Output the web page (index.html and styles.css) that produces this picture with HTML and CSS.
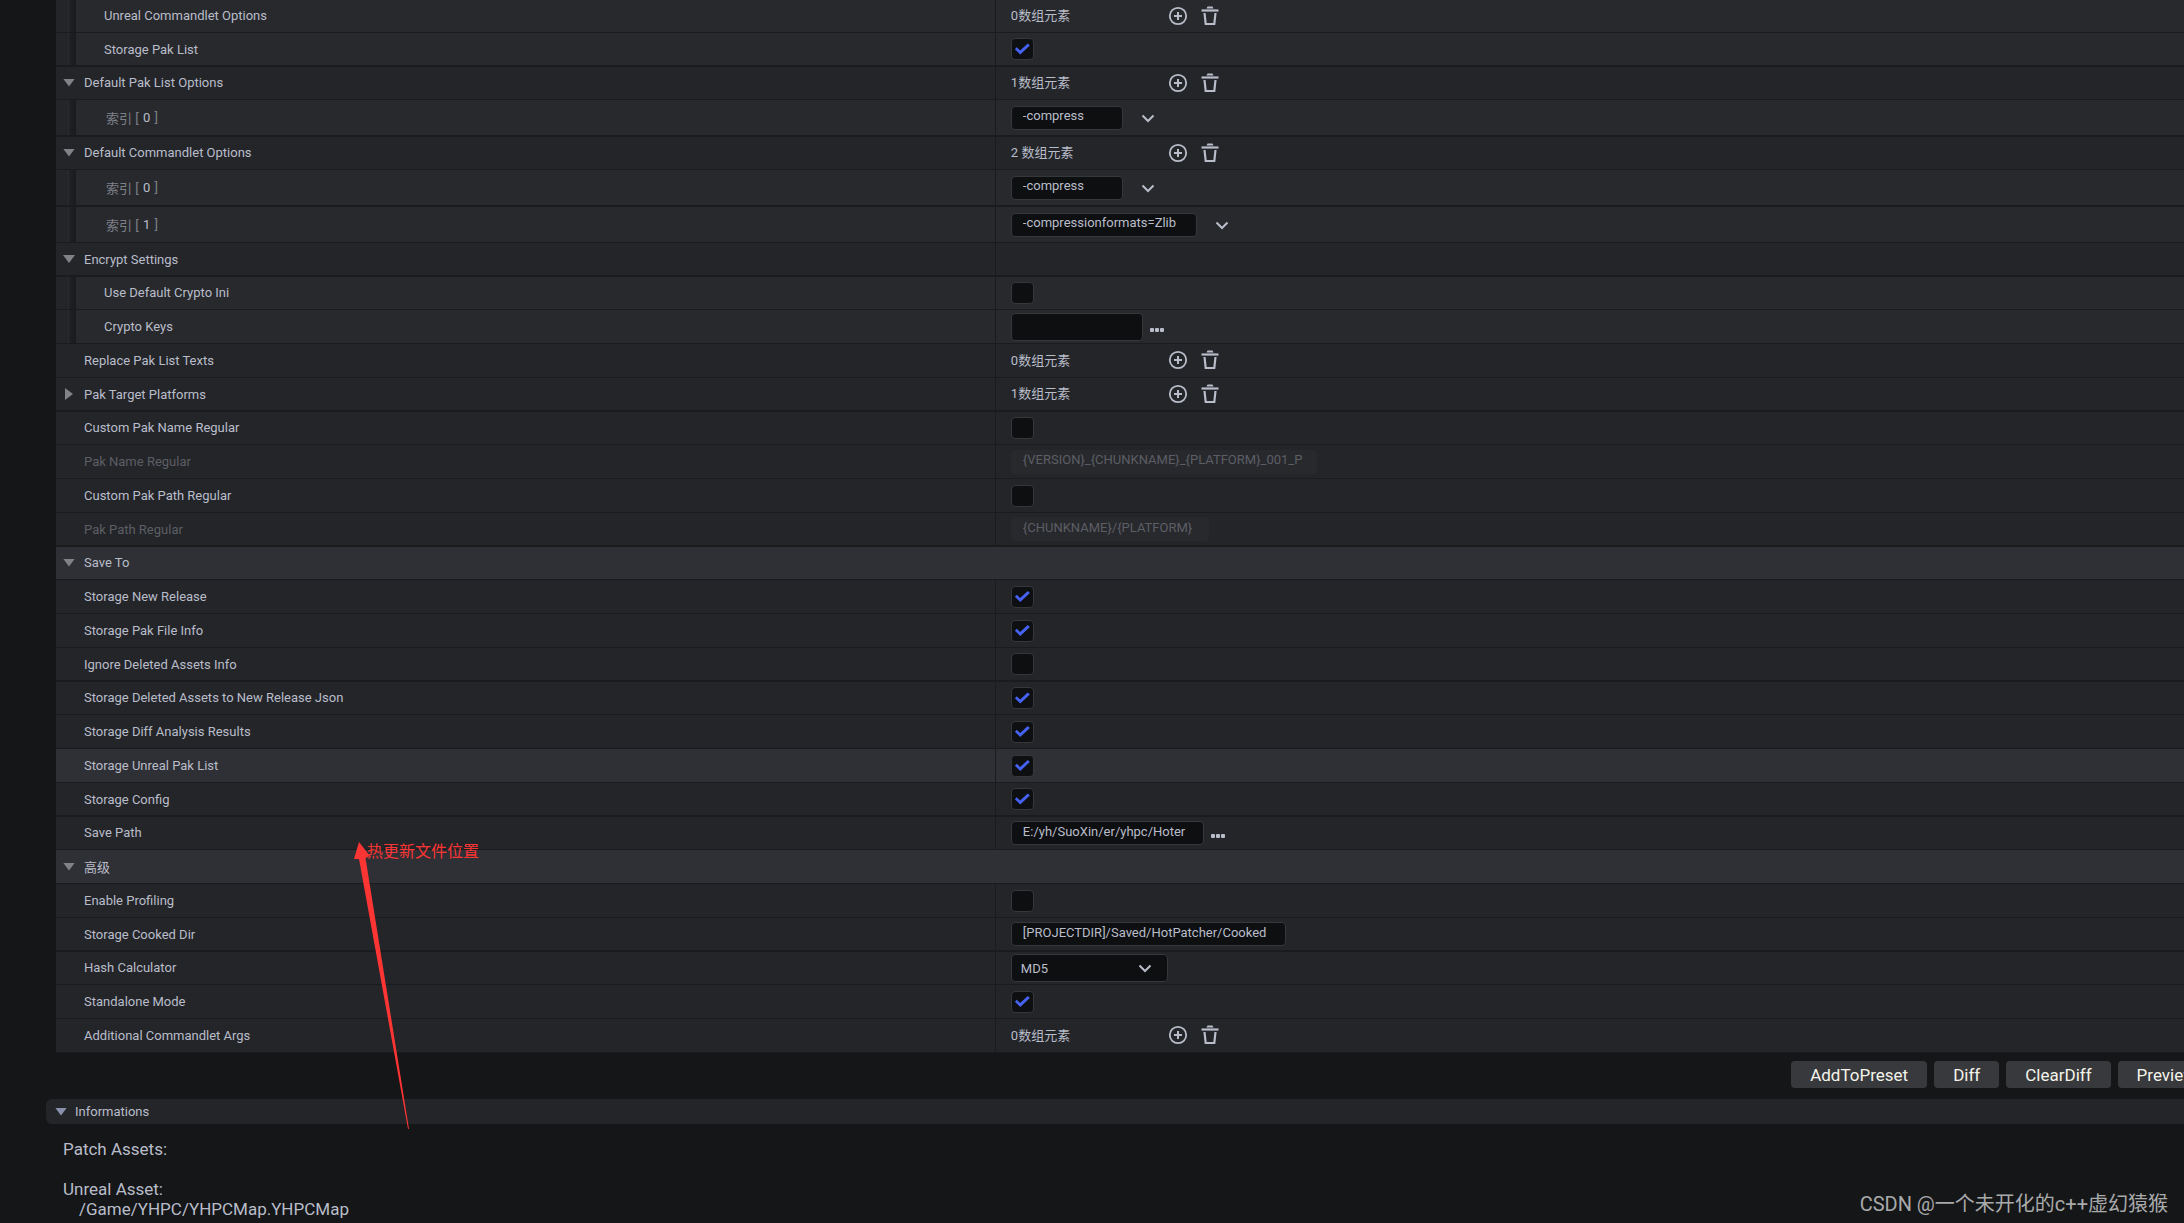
FILE: index.html
```html
<!DOCTYPE html>
<html lang="zh-CN">
<head>
    <meta charset="UTF-8">
    <meta name="viewport" content="width=device-width, initial-scale=1.0">
    <title>HotPatcher</title>
    <link rel="stylesheet" href="styles.css">
</head>
<body>
    <!-- shared icons -->
    <svg class="sprite" aria-hidden="true">
        <symbol id="icon-add" viewBox="0 0 20 20">
            <circle cx="10" cy="10" r="8.2" fill="none" stroke="currentColor" stroke-width="1.8"/>
            <path d="M10 6v8M6 10h8" fill="none" stroke="currentColor" stroke-width="2"/>
        </symbol>
        <symbol id="icon-trash" viewBox="0 0 20 20">
            <path d="M6.500 2.500L7.500 0.500h5l1 2z" fill="currentColor"/>
            <path d="M1.500 4.500h17" fill="none" stroke="currentColor" stroke-width="2.200"/>
            <path d="M4.500 7l1.200 11h8.600l1.200-11" fill="none" stroke="currentColor" stroke-width="2.200"/>
        </symbol>
        <symbol id="icon-chevron" viewBox="0 0 14 14">
            <path d="M1.500 4.500L7 10l5.500-5.500" fill="none" stroke="currentColor" stroke-width="2"/>
        </symbol>
        <symbol id="icon-dots" viewBox="0 0 14 4">
            <rect x="0" y="0" width="4" height="4" rx="1" fill="currentColor"/>
            <rect x="5" y="0" width="4" height="4" rx="1" fill="currentColor"/>
            <rect x="10" y="0" width="4" height="4" rx="1" fill="currentColor"/>
        </symbol>
    </svg>

    <main class="details">
        <div class="row child short">
            <div class="name">Unreal Commandlet Options</div>
            <div class="value">
                <span class="count">0数组元素</span>
                <button class="icon-btn" aria-label="Add"><svg><use href="#icon-add"/></svg></button>
                <button class="icon-btn" aria-label="Clear"><svg><use href="#icon-trash"/></svg></button>
            </div>
        </div>
        <div class="row child thick">
            <label class="name" for="storagePakList">Storage Pak List</label>
            <div class="value"><input type="checkbox" id="storagePakList" checked></div>
        </div>
        <div class="row short">
            <div class="name"><button class="arrow" aria-label="Collapse"></button>Default Pak List Options</div>
            <div class="value">
                <span class="count">1数组元素</span>
                <button class="icon-btn" aria-label="Add"><svg><use href="#icon-add"/></svg></button>
                <button class="icon-btn" aria-label="Clear"><svg><use href="#icon-trash"/></svg></button>
            </div>
        </div>
        <div class="row child item thick">
            <label class="name" for="pakOption0">索引 [ <b>0</b> ]</label>
            <div class="value">
                <input type="text" class="w-small" id="pakOption0" value="-compress">
                <button class="menu-btn" aria-label="Options"><svg><use href="#icon-chevron"/></svg></button>
            </div>
        </div>
        <div class="row short">
            <div class="name"><button class="arrow" aria-label="Collapse"></button>Default Commandlet Options</div>
            <div class="value">
                <span class="count">2 数组元素</span>
                <button class="icon-btn" aria-label="Add"><svg><use href="#icon-add"/></svg></button>
                <button class="icon-btn" aria-label="Clear"><svg><use href="#icon-trash"/></svg></button>
            </div>
        </div>
        <div class="row child item thick">
            <label class="name" for="cmdOption0">索引 [ <b>0</b> ]</label>
            <div class="value">
                <input type="text" class="w-small" id="cmdOption0" value="-compress">
                <button class="menu-btn" aria-label="Options"><svg><use href="#icon-chevron"/></svg></button>
            </div>
        </div>
        <div class="row child item short">
            <label class="name" for="cmdOption1">索引 [ <b>1</b> ]</label>
            <div class="value">
                <input type="text" class="w-medium" id="cmdOption1" value="-compressionformats=Zlib">
                <button class="menu-btn" aria-label="Options"><svg><use href="#icon-chevron"/></svg></button>
            </div>
        </div>
        <div class="row thick">
            <div class="name"><button class="arrow" aria-label="Collapse"></button>Encrypt Settings</div>
            <div class="value"></div>
        </div>
        <div class="row child short">
            <label class="name" for="useCryptoIni">Use Default Crypto Ini</label>
            <div class="value"><input type="checkbox" id="useCryptoIni"></div>
        </div>
        <div class="row child">
            <label class="name" for="cryptoKeys">Crypto Keys</label>
            <div class="value">
                <input type="text" class="w-keys" id="cryptoKeys">
                <button class="dots-btn" aria-label="Browse"><svg><use href="#icon-dots"/></svg></button>
            </div>
        </div>
        <div class="row">
            <div class="name">Replace Pak List Texts</div>
            <div class="value">
                <span class="count">0数组元素</span>
                <button class="icon-btn" aria-label="Add"><svg><use href="#icon-add"/></svg></button>
                <button class="icon-btn" aria-label="Clear"><svg><use href="#icon-trash"/></svg></button>
            </div>
        </div>
        <div class="row thick">
            <div class="name"><button class="arrow closed" aria-label="Expand"></button>Pak Target Platforms</div>
            <div class="value">
                <span class="count">1数组元素</span>
                <button class="icon-btn" aria-label="Add"><svg><use href="#icon-add"/></svg></button>
                <button class="icon-btn" aria-label="Clear"><svg><use href="#icon-trash"/></svg></button>
            </div>
        </div>
        <div class="row short">
            <label class="name" for="customPakName">Custom Pak Name Regular</label>
            <div class="value"><input type="checkbox" id="customPakName"></div>
        </div>
        <div class="row off">
            <label class="name" for="pakName">Pak Name Regular</label>
            <div class="value"><input type="text" class="w-wide" id="pakName" value="{VERSION}_{CHUNKNAME}_{PLATFORM}_001_P" disabled></div>
        </div>
        <div class="row">
            <label class="name" for="customPakPath">Custom Pak Path Regular</label>
            <div class="value"><input type="checkbox" id="customPakPath"></div>
        </div>
        <div class="row off thick">
            <label class="name" for="pakPath">Pak Path Regular</label>
            <div class="value"><input type="text" class="w-path" id="pakPath" value="{CHUNKNAME}/{PLATFORM}" disabled></div>
        </div>

        <div class="row category short">
            <div class="name"><button class="arrow" aria-label="Collapse"></button>Save To</div>
        </div>
        <div class="row">
            <label class="name" for="newRelease">Storage New Release</label>
            <div class="value"><input type="checkbox" id="newRelease" checked></div>
        </div>
        <div class="row">
            <label class="name" for="pakFileInfo">Storage Pak File Info</label>
            <div class="value"><input type="checkbox" id="pakFileInfo" checked></div>
        </div>
        <div class="row thick">
            <label class="name" for="ignoreDeleted">Ignore Deleted Assets Info</label>
            <div class="value"><input type="checkbox" id="ignoreDeleted"></div>
        </div>
        <div class="row short">
            <label class="name" for="storageDeleted">Storage Deleted Assets to New Release Json</label>
            <div class="value"><input type="checkbox" id="storageDeleted" checked></div>
        </div>
        <div class="row">
            <label class="name" for="diffResults">Storage Diff Analysis Results</label>
            <div class="value"><input type="checkbox" id="diffResults" checked></div>
        </div>
        <div class="row active">
            <label class="name" for="unrealPakList">Storage Unreal Pak List</label>
            <div class="value"><input type="checkbox" id="unrealPakList" checked></div>
        </div>
        <div class="row thick">
            <label class="name" for="storageConfig">Storage Config</label>
            <div class="value"><input type="checkbox" id="storageConfig" checked></div>
        </div>
        <div class="row short">
            <label class="name" for="savePath">Save Path</label>
            <div class="value">
                <input type="text" class="w-save" id="savePath" value="E:/yh/SuoXin/er/yhpc/Hoter">
                <button class="dots-btn" aria-label="Browse"><svg><use href="#icon-dots"/></svg></button>
            </div>
        </div>

        <div class="row category">
            <div class="name"><button class="arrow" aria-label="Collapse"></button>高级</div>
        </div>
        <div class="row">
            <label class="name" for="profiling">Enable Profiling</label>
            <div class="value"><input type="checkbox" id="profiling"></div>
        </div>
        <div class="row thick">
            <label class="name" for="cookedDir">Storage Cooked Dir</label>
            <div class="value"><input type="text" class="w-cooked" id="cookedDir" value="[PROJECTDIR]/Saved/HotPatcher/Cooked"></div>
        </div>
        <div class="row short">
            <label class="name" for="hash">Hash Calculator</label>
            <div class="value">
                <div class="select">
                    <select id="hash"><option>MD5</option></select>
                    <svg><use href="#icon-chevron"/></svg>
                </div>
            </div>
        </div>
        <div class="row">
            <label class="name" for="standalone">Standalone Mode</label>
            <div class="value"><input type="checkbox" id="standalone" checked></div>
        </div>
        <div class="row">
            <div class="name">Additional Commandlet Args</div>
            <div class="value">
                <span class="count">0数组元素</span>
                <button class="icon-btn" aria-label="Add"><svg><use href="#icon-add"/></svg></button>
                <button class="icon-btn" aria-label="Clear"><svg><use href="#icon-trash"/></svg></button>
            </div>
        </div>
    </main>

    <!-- the last button runs off the window edge -->
    <div class="actions">
        <button>AddToPreset</button>
        <button>Diff</button>
        <button>ClearDiff</button>
        <button class="cut">Preview</button>
    </div>

    <section class="info">
        <h2><button class="arrow" aria-label="Collapse"></button>Informations</h2>
        <div class="log">
            <p>Patch Assets:</p>
            <p>Unreal Asset:<br><span class="asset">/Game/YHPC/YHPCMap.YHPCMap</span></p>
        </div>
    </section>

    <!-- note over the panel -->
    <div class="note">
        <svg width="58" height="288" viewBox="0 0 58 288">
            <path d="M6 0L17 14L12.500 16L56 287L55 287L6 17L1 17z" fill="#fb3434"/>
        </svg>
        <span>热更新文件位置</span>
    </div>
    <div class="watermark">CSDN @一个未开化的c++虚幻猿猴</div>
</body>
</html>
```

FILE: styles.css
```css
* {
    box-sizing: border-box;
}
body {
    margin: 0;
    height: 100vh;
    overflow: hidden;
    position: relative;
    background-color: #151618;
    color: #b9bdc9;
    font-family: Roboto, "Noto Sans CJK SC", sans-serif;
    font-size: 13px;
}
.sprite {
    display: none;
}
button {
    padding: 0;
    border: none;
    background: none;
    color: inherit;
    font: inherit;
    cursor: pointer;
}
svg {
    display: block;
}

/* property rows */
.details {
    margin-left: 56px;
}
.row {
    display: grid;
    grid-template-columns: 53fr 67fr;
    height: 34px;
    background-color: #242529;
    border-bottom: 1px solid #1a1b1d;
}
.row.short {
    height: 33px;
}
.row.thick {
    border-bottom-width: 2px;
}
.row.item {
    height: 37px;
}
.row.item.short {
    height: 36px;
}
.row.child {
    background: linear-gradient(to right, #242529 12px, #2a2b2f 12px, #2a2b2f 13px, #202124 13px, #1a1b1d 20px, #28292d 20px);
}
.row.category,
.row.active {
    background-color: #2f3035;
}
.name {
    display: flex;
    align-items: center;
    padding: 0 0 0 28px;
    white-space: pre;
    border-right: 1px solid #1a1b1d;
}
.short .name {
    padding-bottom: 1px;
}
.child .name {
    padding-left: 48px;
}
.item .name {
    padding-bottom: 1px;
    padding-left: 50px;
    color: #7d808a;
}
.item b {
    padding: 0 1px;
    color: #b9bdc9;
    font-weight: normal;
}
.off .name {
    color: #5c5e65;
}
.category .name {
    border-right: none;
}
.value {
    display: flex;
    align-items: center;
    padding-left: 15px;
}

/* expander triangle */
.arrow {
    width: 12px;
    height: 8px;
    margin: 0 9px 0 -21px;
    background-color: #808287;
    clip-path: polygon(0 0, 100% 0, 50% 100%);
}
.arrow.closed {
    width: 8px;
    height: 12px;
    margin: 0 11px 0 -19px;
    clip-path: polygon(0 0, 100% 50%, 0 100%);
}

/* controls */
input,
select {
    margin: 0;
    border: 1px solid #36373b;
    border-radius: 4px;
    background-color: #0e0f11;
    color: #b9bdc9;
    font: inherit;
}
input[type="text"] {
    height: 24px;
    padding: 0 11px 4px;
}
input[type="text"]:disabled {
    border-color: #28292d;
    background-color: #28292d;
    color: #5c5e65;
}
input[type="checkbox"] {
    appearance: none;
    display: grid;
    place-items: center;
    width: 23px;
    height: 22px;
}
input[type="checkbox"]:checked::before {
    content: "";
    width: 15px;
    height: 12px;
    background-color: #4562f2;
    clip-path: polygon(0 52%, 13% 36%, 35% 62%, 86% 5%, 100% 20%, 36% 96%);
}
.w-small {
    width: 112px;
}
.w-medium {
    width: 186px;
}
.w-keys {
    width: 132px;
}
input.w-keys {
    height: 28px;
}
.w-wide {
    width: 306px;
}
.w-path {
    width: 198px;
}
.w-save {
    width: 193px;
}
.w-cooked {
    width: 275px;
}
.count {
    width: 157px;
    padding-bottom: 3px;
}
.icon-btn {
    margin: 0 12px 1px 0;
}
.icon-btn svg {
    width: 20px;
    height: 20px;
}
.menu-btn {
    margin-left: 18px;
}
.menu-btn svg,
.select svg {
    width: 14px;
    height: 14px;
}
.dots-btn {
    margin-left: 7px;
    padding-top: 6px;
}
.dots-btn svg {
    width: 14px;
    height: 4px;
}
.select {
    display: grid;
    align-items: center;
    width: 157px;
}
.select select,
.select svg {
    grid-area: 1 / 1;
}
.select select {
    appearance: none;
    width: 100%;
    height: 28px;
    padding: 0 9px;
}
.select svg {
    justify-self: end;
    margin-right: 16px;
    pointer-events: none;
}

/* action buttons */
.actions {
    display: flex;
    justify-content: flex-end;
    gap: 7px;
    height: 46px;
    padding-top: 8px;
    overflow: hidden;
}
.actions button {
    height: 27px;
    padding: 0 19px;
    border-radius: 4px;
    background-color: #38393d;
    color: #f4f4ea;
    font-size: 17px;
}
.actions .cut {
    margin-right: -31px;
}

/* information panel */
.info h2 {
    display: flex;
    align-items: center;
    height: 25px;
    margin: 0 0 0 46px;
    padding-left: 29px;
    border-radius: 6px 0 0 6px;
    background-color: #242529;
    font-size: 13px;
    font-weight: normal;
}
.info .arrow {
    margin: 0 8px 0 -20px;
    background-color: #8791ab;
}
.log {
    padding: 15px 0 0 63px;
    font-size: 17px;
    line-height: 20px;
}
.log p {
    margin: 0 0 20px;
}
.asset {
    padding-left: 16px;
}

/* overlays */
.note {
    position: absolute;
    top: 842px;
    left: 353px;
    color: #fb3434;
    font-size: 16px;
}
.note span {
    position: absolute;
    top: 1px;
    left: 14px;
    line-height: 18px;
    white-space: nowrap;
}
.watermark {
    position: absolute;
    right: 16px;
    bottom: 5px;
    color: #a9aaab;
    font-size: 20px;
    line-height: 28px;
}
```
